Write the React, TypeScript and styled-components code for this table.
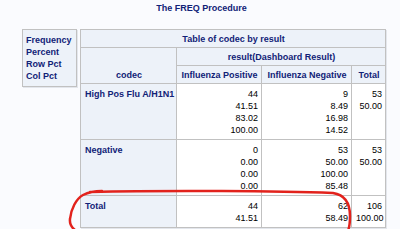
import styled, { createGlobalStyle } from 'styled-components'

const GlobalStyle = createGlobalStyle`
  html, body {
    margin: 0;
    background: #ffffff;
  }
`

const Page = styled.div`
  position: relative;
  width: 400px;
  height: 229px;
  padding-top: 2px;
  box-sizing: border-box;
  background: #fafbfe;
  font-family: 'Liberation Sans', Arial, sans-serif;
  font-size: 9px;
  line-height: 12px;
`

const Title = styled.div`
  text-align: center;
  font-weight: bold;
  color: #112277;
  padding-left: 3px;
  margin-bottom: 15px;
`

const Layout = styled.div`
  display: flex;
  align-items: flex-start;
  gap: 3px;
  padding-left: 22px;
`

const Legend = styled.div`
  width: 55px;
  box-sizing: border-box;
  padding: 4px 3px;
  background: #edf2f9;
  border: 1px solid #c1c1c1;
  box-shadow: 1px 1px 0 #e3e6ec;
  color: #112277;
  font-weight: bold;
`

const Table = styled.table`
  border-collapse: collapse;
  table-layout: fixed;
  width: 305px;
  border: 1px solid #c1c1c1;
  box-shadow: 1px 1px 0 #e3e6ec;
`

const Th = styled.th<{ $align?: string; $valign?: string }>`
  padding: 3px 3px 2px 4px;
  background: #edf2f9;
  color: #112277;
  font-weight: bold;
  border: 1px solid #c1c1c1;
  text-align: ${(p) => p.$align || 'center'};
  vertical-align: ${(p) => p.$valign || 'bottom'};
  white-space: nowrap;
`

const Td = styled.td`
  padding: 4px 3px 3px 4px;
  background: #ffffff;
  color: #000000;
  border: 1px solid #c1c1c1;
  text-align: right;
  vertical-align: top;
  white-space: nowrap;
`

const Mark = styled.svg`
  position: absolute;
  left: 0;
  top: 0;
  pointer-events: none;
`

const rows = [
  { label: 'High Pos Flu A/H1N1', pos: ['44', '41.51', '83.02', '100.00'], neg: ['9', '8.49', '16.98', '14.52'], total: ['53', '50.00'] },
  { label: 'Negative', pos: ['0', '0.00', '0.00', '0.00'], neg: ['53', '50.00', '100.00', '85.48'], total: ['53', '50.00'] },
  { label: 'Total', pos: ['44', '41.51'], neg: ['62', '58.49'], total: ['106', '100.00'] },
]

const Lines = ({ values }: { values: string[] }) => (
  <>
    {values.map((v, i) => (
      <div key={i}>{v}</div>
    ))}
  </>
)

export default function App() {
  return (
    <Page>
      <GlobalStyle />
      <Title>The FREQ Procedure</Title>
      <Layout>
        <Legend>
          <div>Frequency</div>
          <div>Percent</div>
          <div>Row Pct</div>
          <div>Col Pct</div>
        </Legend>
        <Table>
          <colgroup>
            <col style={{ width: 96 }} />
            <col style={{ width: 85 }} />
            <col style={{ width: 90 }} />
            <col style={{ width: 34 }} />
          </colgroup>
          <thead>
            <tr>
              <Th colSpan={4}>Table of codec by result</Th>
            </tr>
            <tr>
              <Th rowSpan={2}>codec</Th>
              <Th colSpan={3}>result(Dashboard Result)</Th>
            </tr>
            <tr>
              <Th>Influenza Positive</Th>
              <Th>Influenza Negative</Th>
              <Th>Total</Th>
            </tr>
          </thead>
          <tbody>
            {rows.map((r) => (
              <tr key={r.label}>
                <Th $align="left" $valign="top" style={{ paddingTop: 4 }}>
                  {r.label}
                </Th>
                <Td>
                  <Lines values={r.pos} />
                </Td>
                <Td>
                  <Lines values={r.neg} />
                </Td>
                <Td>
                  <Lines values={r.total} />
                </Td>
              </tr>
            ))}
          </tbody>
        </Table>
      </Layout>
      <Mark width="400" height="242" viewBox="0 0 400 242">
        <path
          d="M 90 192 C 170 190, 280 191, 333 193 C 346 195, 350 204, 350 216 C 350 229, 348 236, 338 238 C 280 241, 160 240, 92 236 C 76 234, 69 227, 70 219 C 71 209, 76 199, 83 195 C 87 193, 92 191, 102 191"
          fill="none"
          stroke="#e2221c"
          strokeWidth="2.5"
          strokeLinecap="round"
        />
      </Mark>
    </Page>
  )
}
